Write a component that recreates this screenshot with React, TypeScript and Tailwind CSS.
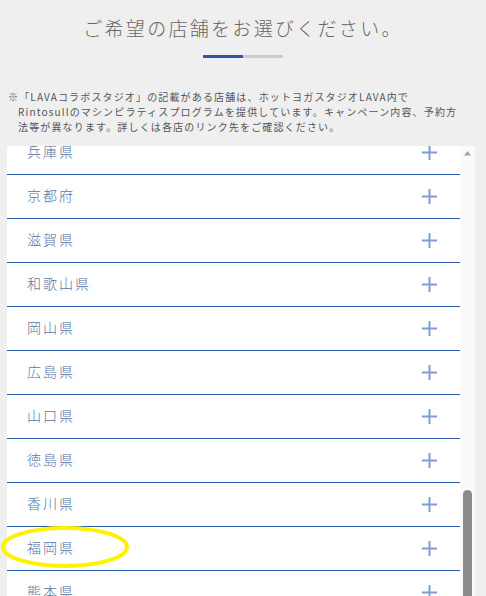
import React from 'react';

const prefectures = [
  '兵庫県',
  '京都府',
  '滋賀県',
  '和歌山県',
  '岡山県',
  '広島県',
  '山口県',
  '徳島県',
  '香川県',
  '福岡県',
  '熊本県',
];

// Thin plus mark shown on the right of each row
const PlusIcon: React.FC = () => (
  <svg width="15" height="15" viewBox="0 0 15 15" className="shrink-0">
    <path d="M7.5 0 V15 M0 7.5 H15" stroke="#7f9dcf" strokeWidth="2" fill="none" />
  </svg>
);

const App: React.FC = () => {
  return (
    <div
      className="relative w-[486px] h-[596px] overflow-hidden bg-[#efefef] flex flex-col"
      style={{ fontFamily: '"Noto Sans CJK JP", "Noto Sans", sans-serif' }}
    >
      {/* heading */}
      <h1 className="pt-[16px] text-center text-[19px] leading-[24px] tracking-[2.3px] font-light text-[#666]">
        ご希望の店舗をお選びください。
      </h1>

      {/* step bar */}
      <div className="mt-[15px] mx-auto flex w-[80px] h-[3px]">
        <div className="w-[40px] bg-[#2c5aa0]" />
        <div className="w-[40px] bg-[#cccccc]" />
      </div>

      {/* note */}
      <div className="mt-[31px] pl-[8px] text-[10px] leading-[15px] tracking-[1.15px] text-[#555] whitespace-nowrap">
        <div>※「LAVAコラボスタジオ」の記載がある店舗は、ホットヨガスタジオLAVA内で</div>
        <div className="pl-[10px]">Rintosullのマシンピラティスプログラムを提供しています。キャンペーン内容、予約方</div>
        <div className="pl-[10px]">法等が異なります。詳しくは各店のリンク先をご確認ください。</div>
      </div>

      {/* scrolling list panel */}
      <div className="mt-[12px] ml-[7px] w-[468px] flex-1 flex overflow-hidden">
        <div className="w-[453px] bg-white overflow-hidden">
          <ul className="-mt-[15px]">
            {prefectures.map((name) => (
              <li
                key={name}
                className="h-[44px] border-b border-solid border-b-[#2a5caa] flex items-center justify-between pl-[20px] pr-[23px]"
              >
                <span className="pb-[3px] text-[14px] tracking-[2px] font-light text-[#5874a4]">{name}</span>
                <PlusIcon />
              </li>
            ))}
          </ul>
        </div>
        {/* scrollbar */}
        <div className="w-[15px] bg-[#fafafa] flex flex-col items-center">
          <svg width="9" height="6" viewBox="0 0 9 6" className="mt-[5px]">
            <path d="M4.5 0 L9 6 H0 Z" fill="#a3a3a3" />
          </svg>
          <div className="mt-[334px] w-[9px] h-[140px] rounded-t-full bg-[#8a8a8a]" />
        </div>
      </div>

      {/* highlight ellipse around 福岡県 */}
      <svg
        className="absolute left-0 top-[525px] pointer-events-none"
        width="132"
        height="44"
        viewBox="0 0 132 44"
      >
        <ellipse cx="65" cy="22" rx="62" ry="19" fill="none" stroke="#fff200" strokeWidth="4" />
      </svg>
    </div>
  );
};

export default App;
